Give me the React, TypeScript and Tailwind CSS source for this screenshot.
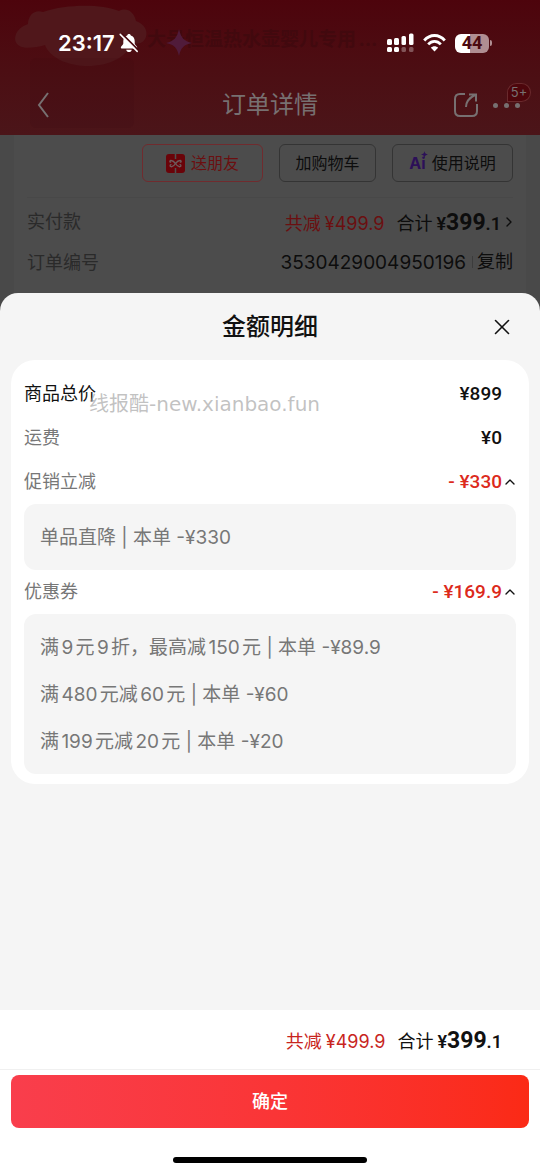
import { useState } from "react";
import { ChevronRight, ChevronUp, X } from "lucide-react";
import clsx from "clsx";

type Detail = { label: string; amount: string; strong?: boolean; items?: string[] };

const details: Detail[] = [
  { label: "商品总价", amount: "¥899", strong: true },
  { label: "运费", amount: "¥0" },
  { label: "促销立减", amount: "- ¥330", items: ["单品直降 | 本单 -¥330"] },
  {
    label: "优惠券",
    amount: "- ¥169.9",
    items: [
      "满9元9折，最高减150元 | 本单 -¥89.9",
      "满480元减60元 | 本单 -¥60",
      "满199元减20元 | 本单 -¥20",
    ],
  },
];

function BellOff() {
  return (
    <svg width="20" height="20" viewBox="0 0 20 20" fill="none">
      <path
        d="M10 1c-.9 0-1.6.6-1.8 1.4C5.7 3.2 4.3 5.3 4.3 8v2.6c0 1.5-2.5 2.6-2.5 4 0 .6.4.9 1 .9h14.400c.6 0 1-.3 1-.9 0-1.400-2.500-2.500-2.500-4V8c0-2.700-1.400-4.800-3.900-5.600C11.600 1.600 10.900 1 10 1Z"
        fill="#fff"
      />
      <path d="M7.2 16.8h5.600c-.3 1.400-1.400 2.300-2.800 2.300s-2.500-.9-2.800-2.300Z" fill="#fff" />
      <path d="M2.8.6 20 17.800" stroke="#4b0a10" strokeWidth="1.8" />
      <path d="m1.2 1.400 17 17" stroke="#fff" strokeWidth="1.5" strokeLinecap="round" />
    </svg>
  );
}

function Signal() {
  return (
    <svg width="27" height="20" viewBox="0 0 27 20" fill="#fff">
      <rect x="0" y="6" width="5" height="6" rx="1.5" />
      <rect x="7" y="5" width="5" height="7" rx="1.5" />
      <rect x="14.5" y="3" width="4.5" height="9" rx="1.5" />
      <rect x="22" y="0.5" width="4.5" height="11.5" rx="1.5" />
      <rect x="0" y="14" width="5" height="5" rx="1.5" />
      <rect x="7" y="14" width="5" height="5" rx="1.5" />
      <rect x="14.5" y="14" width="4.5" height="5" rx="1.5" opacity="0.3" />
      <rect x="22" y="14" width="4.5" height="5" rx="1.5" opacity="0.3" />
    </svg>
  );
}

function Wifi() {
  return (
    <svg width="23" height="18" viewBox="0 0 23 18" fill="none" stroke="#fff" strokeWidth="2.8">
      <path d="M1.2 6.5C7-.2 16-.2 21.8 6.5" />
      <path d="M5.2 10.4c3.7-4 8.9-4 12.6 0" />
      <path d="M11.5 17.4 7.9 13.7c2-2 5.200-2 7.200 0Z" fill="#fff" stroke="none" />
    </svg>
  );
}

function Battery() {
  return (
    <div className="flex items-center gap-px">
      <span className="flex h-[19px] w-[34px] items-center justify-center rounded-md bg-linear-to-r from-white from-45% to-[#b08e92] to-45% font-[Roboto,sans-serif] text-lg leading-none font-bold text-[#4b0a10]">
        44
      </span>
      <span className="h-1.5 w-0.5 rounded-r-full bg-[#b08e92]" />
    </div>
  );
}

// the product card that shows faintly through the dimmed header
function HeaderBackdrop() {
  return (
    <div className="absolute inset-0 overflow-hidden">
      <p className="absolute top-7 left-[147px] text-[19px] leading-6 font-bold whitespace-nowrap text-[#3b090e] opacity-60">
        大号恒温热水壶婴儿专用...
      </p>
      <svg className="absolute top-0 left-0" width="200" height="135" viewBox="0 0 200 135">
        <path
          d="M15 39c0-8 7-13 13-15 0-9 7-15 15-12 24-8 58-8 76-1 8-4 15 1 17 10 8 3 12 9 10 16-3 8-10 7-14 6-5 14-23 23-44 23-20 0-38-8-43-21-14 4-29 5-30-6Z"
          fill="#50171b"
        />
        <rect x="30" y="58" width="104" height="70" rx="6" fill="#3a0a0e" opacity="0.12" />
        <path d="M179 29c2 9 5 12 13 14-8 2-11 4-13 13-2-9-5-11-13-13 8-2 11-5 13-14Z" fill="#501b3a" />
      </svg>
    </div>
  );
}

function GiftIcon() {
  return (
    <svg width="19" height="19" viewBox="0 0 19 19" fill="none">
      <rect width="19" height="19" rx="3" fill="#6a0309" />
      <path d="M9.5 0v5M9.5 14v5" stroke="#505050" strokeWidth="1.5" />
      <path
        d="M9.5 9.5C8 7.500 6.500 6.500 5 6.500c-1.300 0-1.600 1.500-.4 1.700M9.500 9.500c1.500-2 3-3 4.500-3 1.300 0 1.600 1.500.4 1.700M9.500 9.500c-1.500 2.500-3 3.500-4.500 3.200-1.300-.3-1.200-1.800 0-2M9.500 9.500c1.500 2.500 3 3.500 4.500 3.200 1.300-.3 1.200-1.800 0-2"
        stroke="#6d5a5b"
        strokeWidth="1.3"
        strokeLinecap="round"
      />
    </svg>
  );
}

function AiIcon() {
  return (
    <span className="relative text-base leading-none font-bold text-[#2c1058]">
      Ai
      <svg className="absolute -top-1 -right-0.5" width="7" height="7" viewBox="0 0 7 7" fill="currentColor">
        <path d="M3.5 0c.4 2.300 1.200 3.100 3.500 3.500-2.300.4-3.100 1.200-3.500 3.500C3.100 4.700 2.300 3.900 0 3.500 2.300 3.100 3.100 2.300 3.500 0Z" />
      </svg>
    </span>
  );
}

function Total({ dim = false }: { dim?: boolean }) {
  const saved = dim ? "text-[#6b0f10]" : "text-[#c8251d]";
  return (
    <div className="flex items-baseline pt-1">
      <span className={clsx("mr-1", saved)}>共减</span>
      <span className={clsx("mr-3", saved)}>¥499.9</span>
      <span className="mr-1">合计</span>
      <span className="font-[Roboto,sans-serif] leading-none font-semibold">¥</span>
      <span className="font-[Roboto,sans-serif] text-[23px] leading-none font-bold">399</span>
      <span className="font-[Roboto,sans-serif] leading-none font-semibold">.1</span>
    </div>
  );
}

function DetailRow({ label, amount, strong, items }: Detail) {
  const [open, setOpen] = useState(true);
  const name = <span className={strong ? "text-[#111]" : "text-[#777]"}>{label}</span>;
  const price = "font-[Roboto,sans-serif] text-[19px] font-medium";

  if (!items) {
    return (
      <div className="flex h-11 items-center justify-between pr-3.5">
        {name}
        <span className={clsx(price, "text-[#111]")}>{amount}</span>
      </div>
    );
  }

  return (
    <div>
      <button
        type="button"
        aria-expanded={open}
        onClick={() => setOpen(!open)}
        className="flex h-11 w-full items-center justify-between"
      >
        {name}
        <span className="flex items-center">
          <span className={clsx(price, "text-[#dc2a1c]")}>{amount}</span>
          <ChevronUp className={clsx("-mr-0.5 size-4", !open && "rotate-180")} />
        </span>
      </button>
      {open && (
        <ul className="rounded-xl bg-[#f5f5f5] px-4 pt-2.5 pb-[9px] text-[19px] text-[#777]">
          {items.map((item) => (
            <li key={item} className="flex h-[47px] items-center whitespace-pre">
              {item}
            </li>
          ))}
        </ul>
      )}
    </div>
  );
}

export default function App() {
  return (
    <div
      lang="zh-CN"
      className="flex min-h-screen flex-col bg-[#494949] font-[Inter,'Noto_Sans_CJK_SC',sans-serif] text-lg text-[#111] [text-autospace:normal]"
    >
      <header className="relative bg-linear-to-b from-[#4d040c] to-[#4b1519]">
        <HeaderBackdrop />
        <div className="relative flex h-[75px] items-center justify-between pt-[11px] pr-12 pl-[58px] text-white">
          <div className="flex items-center gap-1">
            <span className="text-[22px] leading-none font-semibold">23:17</span>
            <BellOff />
          </div>
          <div className="flex items-center gap-[9px]">
            <Signal />
            <Wifi />
            <Battery />
          </div>
        </div>
        <nav className="relative grid h-[60px] grid-cols-[1fr_auto_1fr] items-center px-5 text-[#777071]">
          <button type="button" aria-label="返回" className="ml-4 justify-self-start">
            <svg width="14" height="28" viewBox="0 0 14 28" fill="none" stroke="currentColor" strokeWidth="2">
              <path d="M12 2 3 14l9 12" />
            </svg>
          </button>
          <h1 className="text-2xl">订单详情</h1>
          <div className="flex items-center gap-[15px] justify-self-end">
            <button type="button" aria-label="分享">
              <svg width="24" height="24" viewBox="0 0 24 24" fill="none" stroke="currentColor" strokeWidth="2">
                <path d="M11 1H6C3 1 1 3 1 6v12c0 3 2 5 5 5h12c3 0 5-2 5-5v-7" />
                <path d="M12 14c0-5 3-9 9-12M15 1.5h7v7" />
              </svg>
            </button>
            <button type="button" aria-label="更多" className="relative flex h-6 items-center gap-[6px]">
              <i className="size-[5px] rounded-full bg-current" />
              <i className="size-[5px] rounded-full bg-current" />
              <i className="size-[5px] rounded-full bg-current" />
              <span className="absolute -top-2.5 left-[14px] flex h-[19px] w-6 items-center justify-center rounded-full rounded-bl-sm border border-[#6a2a2d] bg-[#4d060c] text-[13px]">
                5+
              </span>
            </button>
          </div>
        </nav>
      </header>

      <main className="mx-3.5 bg-[#4c4c4c] px-[13px] pb-2.5 text-[#0d0d0d]">
        <div className="flex justify-end gap-4 border-b border-[#484848] pt-[9px] pb-[15px] text-base">
          <button
            type="button"
            className="flex h-[38px] w-[121px] items-center justify-center gap-1.5 rounded-md border border-[#702b2e] text-[#6b0f10]"
          >
            <GiftIcon />
            送朋友
          </button>
          <button type="button" className="h-[38px] w-[97px] rounded-md border border-[#343434]">
            加购物车
          </button>
          <button
            type="button"
            className="flex h-[38px] w-[121px] items-center justify-center gap-1.5 rounded-md border border-[#343434]"
          >
            <AiIcon />
            使用说明
          </button>
        </div>
        <dl className="pt-[3px]">
          <div className="flex h-[41px] items-center justify-between">
            <dt className="text-[#2a2a2a]">实付款</dt>
            <dd className="flex items-center">
              <Total dim />
              <ChevronRight className="-mr-1 size-4" />
            </dd>
          </div>
          <div className="flex h-[41px] items-center justify-between">
            <dt className="text-[#2a2a2a]">订单编号</dt>
            <dd className="flex items-center">
              <span className="text-[19px]">3530429004950196</span>
              <span className="mr-1 ml-1.5 h-3 w-px bg-[#3c3c3c]" />
              <button type="button">复制</button>
            </dd>
          </div>
        </dl>
      </main>

      <section
        role="dialog"
        aria-labelledby="sheet-title"
        className="flex flex-1 flex-col overflow-hidden rounded-t-[18px] bg-[#f5f5f5]"
      >
        <div className="grid h-[67px] grid-cols-[1fr_auto_1fr] items-center px-[25px]">
          <h2 id="sheet-title" className="col-start-2 text-2xl font-medium">
            金额明细
          </h2>
          <button type="button" aria-label="关闭" className="justify-self-end">
            <X className="size-[26px]" strokeWidth={1.5} />
          </button>
        </div>

        <div className="relative mx-[11px] rounded-3xl bg-white px-[13px] pt-3 pb-2.5">
          {details.map((d) => (
            <DetailRow key={d.label} {...d} />
          ))}
          <p className="pointer-events-none absolute top-8 left-[78px] font-['DejaVu_Sans','Noto_Sans_CJK_SC',sans-serif] text-xl leading-6 whitespace-nowrap text-[#999]/60">
            线报酷-new.xianbao.fun
          </p>
        </div>

        <footer className="mt-auto bg-white">
          <div className="flex h-[60px] items-center justify-end border-b border-[#f0f0f0] pr-[38px]">
            <Total />
          </div>
          <div className="px-[11px] pt-[5px]">
            <button
              type="button"
              className="h-[53px] w-full rounded-lg bg-linear-to-r from-[#f93e4c] to-[#fb2a15] font-medium text-white"
            >
              确定
            </button>
          </div>
          <div className="mx-auto mt-[29px] mb-[11px] h-1.5 w-[194px] rounded-full bg-black" />
        </footer>
      </section>
    </div>
  );
}
